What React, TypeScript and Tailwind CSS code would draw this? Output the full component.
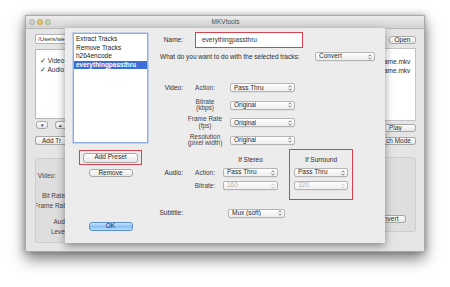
import React from 'react';

function Arrows({ dim = false }: { dim?: boolean }) {
  return (
    <svg width="4" height="6" viewBox="0 0 4 6" className="shrink-0">
      <path
        d="M0.6 2.3 L2 0.8 L3.4 2.3 M0.6 3.7 L2 5.2 L3.4 3.7"
        fill="none"
        stroke={dim ? '#bdbdbd' : '#555'}
        strokeWidth="0.7"
      />
    </svg>
  );
}

function Popup({ label, className, dim = false }: { label: string; className: string; dim?: boolean }) {
  return (
    <div
      className={`flex h-[9px] items-center justify-between rounded-[2px] border border-[#b4b4b4] bg-gradient-to-b from-white to-[#ededed] pl-[3px] pr-[2px] shadow-[0_0.5px_0_rgba(0,0,0,0.08)] ${className} ${
        dim ? 'text-[#b0b0b0]' : 'text-[#2a2a2a]'
      }`}
    >
      <span className="truncate leading-none">{label}</span>
      <Arrows dim={dim} />
    </div>
  );
}

function Button({ label, className }: { label: string; className: string }) {
  return (
    <div
      className={`flex items-center justify-center overflow-hidden whitespace-nowrap rounded-[3px] border border-[#a8a8a8] bg-gradient-to-b from-white to-[#e6e6e6] leading-none text-[#2a2a2a] ${className}`}
    >
      {label}
    </div>
  );
}

function VideoRow({ label, sub, value }: { label?: string; sub: string[]; value: string }) {
  return (
    <div className="flex h-[17.5px] items-center">
      <div className="w-[28px] text-right">{label}</div>
      <div className="ml-[4px] flex w-[36px] flex-col items-center leading-[6.5px] text-[#444]">
        {sub.map(s => (
          <span key={s}>{s}</span>
        ))}
      </div>
      <Popup label={value} className="ml-[7px] w-[65px]" />
    </div>
  );
}

export default function App() {
  const presets = ['Extract Tracks', 'Remove Tracks', 'h264encode', 'everythingpassthru'];

  return (
    <div className="h-[287px] w-[450px] overflow-hidden bg-white pl-[25px] pt-[15px] font-['Liberation_Sans',Arial,sans-serif] text-[6.5px] text-[#2e2e2e]">
      <div className="relative flex h-[237px] w-[400px] flex-col border border-[#a9a9a9] bg-[#e5e5e5] shadow-[0_7px_14px_rgba(0,0,0,0.5),0_0_6px_rgba(0,0,0,0.25)]">
        {/* title bar */}
        <div className="relative flex h-[13px] shrink-0 items-center border-b border-[#b9b9b9] bg-gradient-to-b from-[#ececec] to-[#d3d3d3] pl-[3px]">
          <div className="flex gap-[2px]">
            <span className="h-[6px] w-[6px] rounded-full border border-[#b0b0b0] bg-[#d2d2d2]" />
            <span className="h-[6px] w-[6px] rounded-full border border-[#c4a64e] bg-[#e3c76f]" />
            <span className="h-[6px] w-[6px] rounded-full border border-[#a9bc96] bg-[#c3d4b0]" />
          </div>
          <div className="flex-1 pr-[24px] text-center text-[#4a4a4a]">MKVtools</div>
        </div>

        {/* window body, mostly hidden by the sheet */}
        <div className="flex flex-1 justify-between pl-[9px] pr-[8px] pt-[5px]">
          <div className="flex w-[30px] flex-col">
            <div className="flex h-[10px] items-center overflow-hidden whitespace-nowrap rounded-l-[2px] border border-r-0 border-[#b4b4b4] bg-white pl-[2px] text-[6px] text-[#333]">
              /Users/we
            </div>
            <div className="mt-[5px] h-[70px] overflow-hidden whitespace-nowrap border border-r-0 border-[#b9b9b9] bg-white pl-[4px] pt-[6px] leading-[9px]">
              <div>✓ Video</div>
              <div>✓ Audio</div>
            </div>
            <div className="mt-[2px] flex gap-[7px] pl-[1px]">
              <Button label="▾" className="h-[8px] w-[13px] text-[5px]" />
              <Button label="▴" className="h-[8px] w-[10px] rounded-r-none border-r-0 text-[5px]" />
            </div>
            <div className="mt-[7px] flex h-[9px] items-center overflow-hidden whitespace-nowrap rounded-l-[3px] border border-r-0 border-[#a8a8a8] bg-gradient-to-b from-white to-[#e6e6e6] pl-[6px]">
              Add Tr
            </div>
            <div className="mt-[13px] flex h-[85px] flex-col items-end overflow-hidden whitespace-nowrap rounded-l-[3px] border border-r-0 border-[#cdcdcd] bg-[#dedede] pt-[12px] leading-[10px] text-[#444]">
              <div className="mr-[9px]">Video:</div>
              <div className="mt-[10px]">Bit Rate</div>
              <div>Frame Rat</div>
              <div className="mt-[6px]">Aud</div>
              <div>Leve</div>
            </div>
          </div>

          <div className="flex w-[32px] flex-col items-end">
            <Button label="Open" className="mt-[2px] h-[8px] w-[27px]" />
            <div className="mt-[4px] h-[73px] w-[32px] overflow-hidden whitespace-nowrap border border-l-0 border-[#c4c4c4] bg-white pt-[9px] leading-[8.5px]">
              <div>ame.mkv</div>
              <div>ame.mkv</div>
            </div>
            <div className="mt-[3px] flex h-[8px] w-[30px] items-center overflow-hidden whitespace-nowrap rounded-r-[3px] border border-l-0 border-[#a8a8a8] bg-gradient-to-b from-white to-[#e6e6e6] pl-[3px]">
              Play
            </div>
            <div className="mt-[5px] flex h-[8px] w-[32px] items-center overflow-hidden whitespace-nowrap rounded-r-[3px] border border-l-0 border-[#a8a8a8] bg-gradient-to-b from-white to-[#e6e6e6] pl-[2px]">
              ch Mode
            </div>
            <div className="mt-[12px] flex h-[75px] w-[32px] flex-col justify-end rounded-r-[3px] border border-l-0 border-[#cdcdcd] bg-[#dedede] pb-[8px]">
              <div className="flex h-[8px] w-[22px] items-center overflow-hidden whitespace-nowrap rounded-r-[3px] border border-l-0 border-[#a8a8a8] bg-gradient-to-b from-white to-[#e6e6e6]">
                nvert
              </div>
            </div>
          </div>
        </div>

        {/* sheet */}
        <div className="absolute left-[39px] top-[12px] flex h-[215px] w-[320px] bg-[#ececec] shadow-[0_3px_8px_rgba(0,0,0,0.4)]">
          <div className="flex w-[90px] flex-col pl-[8px] pt-[5px]">
            <div className="h-[110px] w-[75px] border border-[#8eaee3] bg-white pt-[1px] shadow-[0_0_0_1px_rgba(120,160,230,0.35)]">
              {presets.map(p => (
                <div
                  key={p}
                  className={`h-[8.5px] px-[2px] leading-[8.5px] ${
                    p === 'everythingpassthru' ? 'bg-[#3b6ed6] font-bold text-white' : 'text-[#222]'
                  }`}
                >
                  {p}
                </div>
              ))}
            </div>
            <div className="flex w-[75px] flex-col items-center">
              <div className="mt-[7px] flex h-[15px] w-[63px] items-center justify-center border border-[#d9414e]">
                <Button label="Add Preset" className="h-[10px] w-[55px]" />
              </div>
              <Button label="Remove" className="mt-[4px] h-[8px] w-[44px]" />
              <div className="mt-[45px] flex h-[9px] w-[44px] items-center justify-center rounded-[3px] border border-[#5a8fcf] bg-gradient-to-b from-[#cfe6fb] via-[#8cc2f2] to-[#b6dbf8] leading-none text-[#1e2a3a]">
                OK
              </div>
            </div>
          </div>

          <div className="flex flex-col">
            <div className="mt-[4px] flex h-[16px] items-center">
              <div className="w-[28px] text-right">Name:</div>
              <div className="ml-[12px] flex h-[16px] w-[108px] items-center border border-[#d9414e] bg-white pl-[6px] text-[#333]">
                everythingpassthru
              </div>
            </div>
            <div className="mt-[4px] flex h-[9px] items-center pl-[5px]">
              <span className="w-[155px]">What do you want to do with the selected tracks:</span>
              <Popup label="Convert" className="w-[60px]" />
            </div>

            <div className="mt-[18px] flex flex-col">
              <VideoRow label="Video:" sub={['Action:']} value="Pass Thru" />
              <VideoRow sub={['Bitrate', '(kbps)']} value="Original" />
              <VideoRow sub={['Frame Rate', '(fps)']} value="Original" />
              <VideoRow sub={['Resolution', '(pixel width)']} value="Original" />
            </div>

            <div className="flex">
              <div className="flex flex-col pt-[1px]">
                <div className="h-[16px]" />
                <div className="flex h-[13px] items-center">
                  <div className="w-[28px] text-right">Audio:</div>
                  <div className="ml-[4px] w-[36px] text-center text-[#444]">Action:</div>
                </div>
                <div className="flex h-[13px] items-center">
                  <div className="w-[28px]" />
                  <div className="ml-[4px] w-[36px] text-center text-[#444]">Bitrate:</div>
                </div>
              </div>
              <div className="ml-[-1px] flex h-[51px] w-[57px] flex-col items-center border border-transparent">
                <div className="flex h-[16px] items-end pb-[1px]">If Stereo</div>
                <div className="flex h-[13px] items-center">
                  <Popup label="Pass Thru" className="w-[55px]" />
                </div>
                <div className="flex h-[13px] items-center">
                  <Popup label="160" className="w-[55px]" dim />
                </div>
              </div>
              <div className="ml-[10px] flex h-[51px] w-[64px] flex-col items-center border border-[#d9414e]">
                <div className="flex h-[16px] items-end pb-[1px]">If Surround</div>
                <div className="flex h-[13px] items-center">
                  <Popup label="Pass Thru" className="w-[54px]" />
                </div>
                <div className="flex h-[13px] items-center">
                  <Popup label="320" className="w-[54px]" dim />
                </div>
              </div>
            </div>

            <div className="mt-[6px] flex h-[14px] items-center">
              <div className="w-[28px] text-right">Subtitle:</div>
              <Popup label="Mux (soft)" className="ml-[45px] w-[57px]" />
            </div>
          </div>
        </div>
      </div>
    </div>
  );
}
